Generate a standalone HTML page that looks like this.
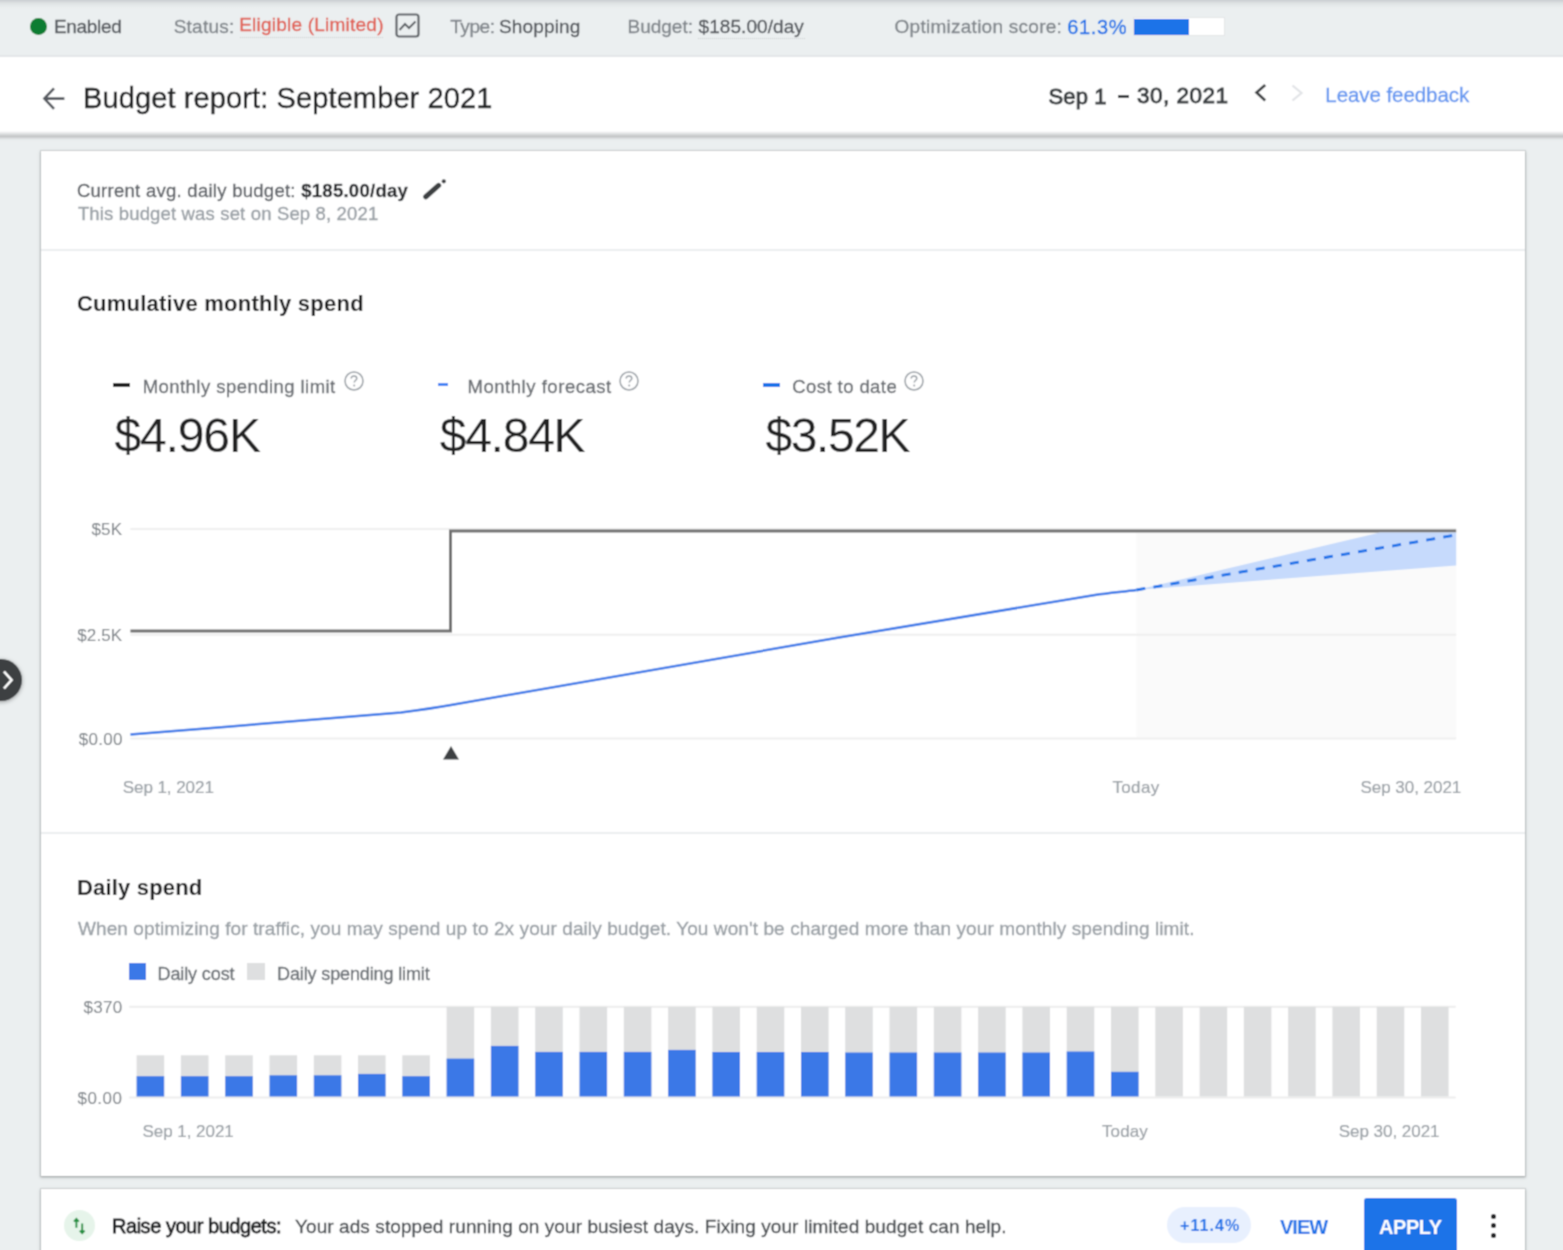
<!DOCTYPE html>
<html><head><meta charset="utf-8"><style>
html,body{margin:0;padding:0;width:1563px;height:1250px;overflow:hidden;background:#ebeff0;font-family:"Liberation Sans", sans-serif;}
.t{position:absolute;white-space:nowrap;}
.r{position:absolute;}
</style></head><body><svg width="0" height="0" style="position:absolute"><filter id="bl" x="0" y="0" width="100%" height="100%"><feConvolveMatrix order="3" kernelMatrix="0.0484 0.1232 0.0484 0.1232 0.3136 0.1232 0.0484 0.1232 0.0484" edgeMode="duplicate"/></filter></svg><div id="w" style="position:absolute;left:0;top:0;width:1563px;height:1250px;overflow:hidden;background:#ebeff0;filter:url(#bl)">
<div class="r" style="left:0.0px;top:0.0px;width:1563.0px;height:56.0px;background:#ebeff0;"></div>
<div class="r" style="left:0.0px;top:0.0px;width:1563.0px;height:8.0px;background:linear-gradient(#c9cdd0,#dfe3e4 40%,#ebeff0);"></div>
<div class="r" style="left:0.0px;top:55.0px;width:1563.0px;height:2.0px;background:#e3e6e8;"></div>
<div class="r" style="left:30px;top:18px;width:17px;height:17px;border-radius:50%;background:#0d7d30"></div>
<div class="t" style="left:53.90px;top:17.05px;font-size:19px;line-height:19px;color:#55595e;font-weight:400;letter-spacing:-0.304px;-webkit-text-stroke:0.35px #55595e;">Enabled</div>
<div class="t" style="left:173.70px;top:17.05px;font-size:19px;line-height:19px;color:#80868b;font-weight:400;letter-spacing:0.231px;-webkit-text-stroke:0.35px #80868b;">Status:</div>
<div class="t" style="left:239.20px;top:15.45px;font-size:19px;line-height:19px;color:#e06055;font-weight:400;letter-spacing:0.225px;-webkit-text-stroke:0.35px #e06055;">Eligible (Limited)</div>
<div class="r" style="left:240px;top:36.8px;width:143px;height:0;border-top:1.5px dotted #c8cbce"></div>
<svg class="r" style="left:395px;top:13px" width="25" height="25" viewBox="0 0 25 25"><rect x="1.5" y="1.5" width="22" height="22" rx="2.5" fill="none" stroke="#5f6368" stroke-width="2.2"/><path d="M4.5 17 L10 11 L14 15 L20.5 8.5" fill="none" stroke="#5f6368" stroke-width="2"/></svg>
<div class="t" style="left:450.20px;top:17.05px;font-size:19px;line-height:19px;color:#80868b;font-weight:400;letter-spacing:-0.425px;-webkit-text-stroke:0.35px #80868b;">Type:</div>
<div class="t" style="left:498.90px;top:17.05px;font-size:19px;line-height:19px;color:#55595e;font-weight:400;letter-spacing:0.159px;-webkit-text-stroke:0.35px #55595e;">Shopping</div>
<div class="t" style="left:627.50px;top:17.05px;font-size:19px;line-height:19px;color:#80868b;font-weight:400;letter-spacing:0.000px;-webkit-text-stroke:0.35px #80868b;">Budget:</div>
<div class="t" style="left:698.50px;top:17.05px;font-size:19px;line-height:19px;color:#55595e;font-weight:400;letter-spacing:0.070px;-webkit-text-stroke:0.35px #55595e;">$185.00/day</div>
<div class="r" style="left:698px;top:37.6px;width:107px;height:0;border-top:1.5px dotted #c8cbce"></div>
<div class="t" style="left:894.50px;top:17.05px;font-size:19px;line-height:19px;color:#80868b;font-weight:400;letter-spacing:0.266px;-webkit-text-stroke:0.35px #80868b;">Optimization score:</div>
<div class="t" style="left:1067.20px;top:17.00px;font-size:20px;line-height:20px;color:#1a73e8;font-weight:400;letter-spacing:0.675px;-webkit-text-stroke:0.35px #1a73e8;">61.3%</div>
<div class="r" style="left:1133.0px;top:17.0px;width:91.5px;height:19.0px;background:#ffffff;border:1px solid #e3e5e7;box-sizing:border-box"></div>
<div class="r" style="left:1134.0px;top:18.5px;width:54.6px;height:16.0px;background:#1a73e8;"></div>
<div class="r" style="left:0.0px;top:57.0px;width:1563.0px;height:74.0px;background:#ffffff;"></div>
<div class="r" style="left:0.0px;top:131.0px;width:1563.0px;height:10.0px;background:linear-gradient(#ffffff 0px,#dcdedf 3px,#c3c4c6 5.5px,#e3e6e8 8px,#ebeff0 10px);"></div>
<svg class="r" style="left:40px;top:86px" width="26" height="26" viewBox="0 0 26 26"><path d="M24.4 12.6 H5 M14 2.3 L4.4 12.6 L14 22.9" fill="none" stroke="#55595e" stroke-width="2.6"/></svg>
<div class="t" style="left:83.00px;top:84.05px;font-size:29px;line-height:29px;color:#202124;font-weight:400;letter-spacing:0.112px;-webkit-text-stroke:0.35px #202124;">Budget report: September 2021</div>
<div class="t" style="left:1048.50px;top:85.90px;font-size:22px;line-height:22px;color:#3c4043;font-weight:400;letter-spacing:0.125px;-webkit-text-stroke:0.95px #3c4043;">Sep 1</div>
<div class="r" style="left:1117.6px;top:95.3px;width:11.8px;height:2.5px;background:#3c4043;"></div>
<div class="t" style="left:1136.90px;top:85.47px;font-size:22.5px;line-height:22.5px;color:#3c4043;font-weight:400;letter-spacing:0.515px;-webkit-text-stroke:0.95px #3c4043;">30, 2021</div>
<svg class="r" style="left:1252px;top:83px" width="18" height="20" viewBox="0 0 18 20"><path d="M13.2 2 L4.6 9.5 L13.2 17.5" fill="none" stroke="#3c4043" stroke-width="2.8"/></svg>
<svg class="r" style="left:1288px;top:83px" width="18" height="20" viewBox="0 0 18 20"><path d="M4.5 2.5 L13.5 10 L4.5 17.5" fill="none" stroke="#e1e3e6" stroke-width="2.2"/></svg>
<div class="t" style="left:1325.30px;top:85.48px;font-size:20.5px;line-height:20.5px;color:#6497f0;font-weight:400;letter-spacing:-0.064px;-webkit-text-stroke:0.35px #6497f0;">Leave feedback</div>
<div class="r" style="left:41.0px;top:151.0px;width:1484.0px;height:1025.0px;background:#ffffff;box-shadow:0 0 0 1px rgba(60,64,67,.12),0 1px 2px rgba(60,64,67,.3),0 1px 3px 1px rgba(60,64,67,.15)"></div>
<div class="t" style="left:76.90px;top:182.08px;font-size:18.5px;line-height:18.5px;color:#5f6368;font-weight:400;letter-spacing:0.271px;-webkit-text-stroke:0.35px #5f6368;">Current avg. daily budget: <b style="font-weight:700;color:#202124">$185.00/day</b></div>
<svg class="r" style="left:415px;top:170px" width="40" height="40" viewBox="0 0 40 40"><path d="M10.8 26.8 L23.6 15.4" fill="none" stroke="#3c4043" stroke-width="5.2" stroke-linecap="round"/><circle cx="28.8" cy="11.3" r="2.1" fill="#3c4043"/></svg>
<div class="t" style="left:77.90px;top:205.08px;font-size:18.5px;line-height:18.5px;color:#9aa0a6;font-weight:400;letter-spacing:0.157px;-webkit-text-stroke:0.35px #9aa0a6;">This budget was set on Sep 8, 2021</div>
<div class="r" style="left:41.0px;top:248.5px;width:1484.0px;height:2.0px;background:#eceef0;"></div>
<div class="t" style="left:76.90px;top:293.30px;font-size:22px;line-height:22px;color:#202124;font-weight:700;letter-spacing:0.241px;">Cumulative monthly spend</div>
<div class="r" style="left:112.5px;top:382.5px;width:17.8px;height:4.0px;background:#202124;"></div>
<div class="t" style="left:142.70px;top:377.88px;font-size:18.5px;line-height:18.5px;color:#6a6e73;font-weight:400;letter-spacing:0.452px;-webkit-text-stroke:0.35px #6a6e73;">Monthly spending limit</div>
<div class="r" style="left:437.7px;top:383.0px;width:10.7px;height:2.8px;background:#4285f4;"></div>
<div class="t" style="left:467.50px;top:377.88px;font-size:18.5px;line-height:18.5px;color:#6a6e73;font-weight:400;letter-spacing:0.534px;-webkit-text-stroke:0.35px #6a6e73;">Monthly forecast</div>
<div class="r" style="left:763.0px;top:382.5px;width:17.3px;height:4.0px;background:#1a73e8;"></div>
<div class="t" style="left:792.30px;top:377.88px;font-size:18.5px;line-height:18.5px;color:#6a6e73;font-weight:400;letter-spacing:0.421px;-webkit-text-stroke:0.35px #6a6e73;">Cost to date</div>
<svg class="r" style="left:342.7px;top:369.6px" width="22" height="22" viewBox="0 0 22 22"><circle cx="11" cy="11" r="9" fill="none" stroke="#9aa0a6" stroke-width="1.5"/><path d="M8.2 8.6 C8.2 6.9 9.5 6 11 6 C12.6 6 13.8 7 13.8 8.4 C13.8 10.2 11.2 10.4 11.2 12.6" fill="none" stroke="#9aa0a6" stroke-width="1.5"/><circle cx="11.2" cy="15.4" r="1" fill="#9aa0a6"/></svg>
<svg class="r" style="left:618.2px;top:369.6px" width="22" height="22" viewBox="0 0 22 22"><circle cx="11" cy="11" r="9" fill="none" stroke="#9aa0a6" stroke-width="1.5"/><path d="M8.2 8.6 C8.2 6.9 9.5 6 11 6 C12.6 6 13.8 7 13.8 8.4 C13.8 10.2 11.2 10.4 11.2 12.6" fill="none" stroke="#9aa0a6" stroke-width="1.5"/><circle cx="11.2" cy="15.4" r="1" fill="#9aa0a6"/></svg>
<svg class="r" style="left:902.7px;top:369.6px" width="22" height="22" viewBox="0 0 22 22"><circle cx="11" cy="11" r="9" fill="none" stroke="#9aa0a6" stroke-width="1.5"/><path d="M8.2 8.6 C8.2 6.9 9.5 6 11 6 C12.6 6 13.8 7 13.8 8.4 C13.8 10.2 11.2 10.4 11.2 12.6" fill="none" stroke="#9aa0a6" stroke-width="1.5"/><circle cx="11.2" cy="15.4" r="1" fill="#9aa0a6"/></svg>
<div class="t" style="left:114.50px;top:411.70px;font-size:48px;line-height:48px;color:#202124;font-weight:400;letter-spacing:-1.140px;">$4.96K</div>
<div class="t" style="left:439.70px;top:411.70px;font-size:48px;line-height:48px;color:#202124;font-weight:400;letter-spacing:-1.240px;">$4.84K</div>
<div class="t" style="left:765.50px;top:411.70px;font-size:48px;line-height:48px;color:#202124;font-weight:400;letter-spacing:-1.420px;">$3.52K</div>
<svg class="r" style="left:0;top:0" width="1563" height="1250"><rect x="1136.4" y="529" width="319.8" height="209.6" fill="#fafafa"/><line x1="130.4" x2="1456.2" y1="529" y2="529" stroke="#efefef" stroke-width="2"/><line x1="130.4" x2="1456.2" y1="634.8" y2="634.8" stroke="#efefef" stroke-width="2"/><line x1="130.4" x2="1456.2" y1="738.6" y2="738.6" stroke="#efefef" stroke-width="2"/><path d="M130.4 631 H450.5 V531 H1456.2" fill="none" stroke="#707070" stroke-width="3"/><path d="M1136.4 590 L1380 532.5 L1456.2 532.5 L1456.2 565.5 Z" fill="#c6dafc"/><path d="M130.4 734.6 C220 727 330 719 401 712.4 C420 710 440 707 451 705 L837.5 637.8 L1095 595 C1110 593 1125 591.5 1136.4 590" fill="none" stroke="#3a7ae8" stroke-width="2.5"/><path d="M1136.4 590 L1456.2 535" fill="none" stroke="#1a73e8" stroke-width="2.8" stroke-dasharray="9 8.3"/><path d="M443 759.4 L451 746 L459 759.4 Z" fill="#3c4043"/></svg>
<div class="t" style="left:91.40px;top:521.05px;font-size:17px;line-height:17px;color:#80868b;font-weight:400;letter-spacing:0.200px;-webkit-text-stroke:0.1px #80868b;">$5K</div>
<div class="t" style="left:77.20px;top:626.55px;font-size:17px;line-height:17px;color:#80868b;font-weight:400;letter-spacing:0.150px;-webkit-text-stroke:0.1px #80868b;">$2.5K</div>
<div class="t" style="left:78.80px;top:730.55px;font-size:17px;line-height:17px;color:#80868b;font-weight:400;letter-spacing:0.250px;-webkit-text-stroke:0.1px #80868b;">$0.00</div>
<div class="t" style="left:122.70px;top:779.05px;font-size:17px;line-height:17px;color:#9aa0a6;font-weight:400;letter-spacing:-0.050px;-webkit-text-stroke:0.2px #9aa0a6;">Sep 1, 2021</div>
<div class="t" style="left:1112.50px;top:779.05px;font-size:17px;line-height:17px;color:#9aa0a6;font-weight:400;letter-spacing:0.325px;-webkit-text-stroke:0.2px #9aa0a6;">Today</div>
<div class="t" style="left:1360.50px;top:779.05px;font-size:17px;line-height:17px;color:#9aa0a6;font-weight:400;letter-spacing:-0.033px;-webkit-text-stroke:0.2px #9aa0a6;">Sep 30, 2021</div>
<div class="r" style="left:41.0px;top:832.0px;width:1484.0px;height:2.0px;background:#eceef0;"></div>
<div class="t" style="left:77.00px;top:876.70px;font-size:22px;line-height:22px;color:#202124;font-weight:700;letter-spacing:0.180px;">Daily spend</div>
<div class="t" style="left:78.00px;top:918.85px;font-size:19px;line-height:19px;color:#9aa0a6;font-weight:400;letter-spacing:0.090px;-webkit-text-stroke:0.35px #9aa0a6;">When optimizing for traffic, you may spend up to 2x your daily budget. You won&#39;t be charged more than your monthly spending limit.</div>
<div class="r" style="left:128.5px;top:962.5px;width:17.2px;height:17.3px;background:#3b78e7;"></div>
<div class="t" style="left:157.50px;top:964.70px;font-size:18px;line-height:18px;color:#6b7075;font-weight:400;letter-spacing:-0.111px;-webkit-text-stroke:0.35px #6b7075;">Daily cost</div>
<div class="r" style="left:247.4px;top:962.5px;width:18.1px;height:17.3px;background:#dedfe0;"></div>
<div class="t" style="left:277.10px;top:964.70px;font-size:18px;line-height:18px;color:#6b7075;font-weight:400;letter-spacing:-0.132px;-webkit-text-stroke:0.35px #6b7075;">Daily spending limit</div>
<svg class="r" style="left:0;top:0" width="1563" height="1250"><line x1="129.2" x2="1455.7" y1="1006.8" y2="1006.8" stroke="#ededed" stroke-width="2"/><line x1="129.2" x2="1455.7" y1="1097.4" y2="1097.4" stroke="#ededed" stroke-width="2"/><rect x="136.6" y="1055.3" width="27.6" height="41.2" fill="#dedfe0"/><rect x="136.6" y="1076.2" width="27.6" height="20.3" fill="#3b78e7"/><rect x="180.9" y="1055.3" width="27.6" height="41.2" fill="#dedfe0"/><rect x="180.9" y="1076.2" width="27.6" height="20.3" fill="#3b78e7"/><rect x="225.2" y="1055.3" width="27.6" height="41.2" fill="#dedfe0"/><rect x="225.2" y="1076.2" width="27.6" height="20.3" fill="#3b78e7"/><rect x="269.5" y="1055.3" width="27.6" height="41.2" fill="#dedfe0"/><rect x="269.5" y="1075.3" width="27.6" height="21.2" fill="#3b78e7"/><rect x="313.8" y="1055.3" width="27.6" height="41.2" fill="#dedfe0"/><rect x="313.8" y="1075.3" width="27.6" height="21.2" fill="#3b78e7"/><rect x="358.0" y="1055.3" width="27.6" height="41.2" fill="#dedfe0"/><rect x="358.0" y="1073.9" width="27.6" height="22.6" fill="#3b78e7"/><rect x="402.3" y="1055.3" width="27.6" height="41.2" fill="#dedfe0"/><rect x="402.3" y="1076.2" width="27.6" height="20.3" fill="#3b78e7"/><rect x="446.6" y="1006.8" width="27.6" height="89.7" fill="#dedfe0"/><rect x="446.6" y="1058.6" width="27.6" height="37.9" fill="#3b78e7"/><rect x="490.9" y="1006.8" width="27.6" height="89.7" fill="#dedfe0"/><rect x="490.9" y="1045.9" width="27.6" height="50.6" fill="#3b78e7"/><rect x="535.2" y="1006.8" width="27.6" height="89.7" fill="#dedfe0"/><rect x="535.2" y="1051.9" width="27.6" height="44.6" fill="#3b78e7"/><rect x="579.5" y="1006.8" width="27.6" height="89.7" fill="#dedfe0"/><rect x="579.5" y="1051.9" width="27.6" height="44.6" fill="#3b78e7"/><rect x="623.8" y="1006.8" width="27.6" height="89.7" fill="#dedfe0"/><rect x="623.8" y="1051.9" width="27.6" height="44.6" fill="#3b78e7"/><rect x="668.1" y="1006.8" width="27.6" height="89.7" fill="#dedfe0"/><rect x="668.1" y="1049.9" width="27.6" height="46.6" fill="#3b78e7"/><rect x="712.4" y="1006.8" width="27.6" height="89.7" fill="#dedfe0"/><rect x="712.4" y="1052" width="27.6" height="44.5" fill="#3b78e7"/><rect x="756.7" y="1006.8" width="27.6" height="89.7" fill="#dedfe0"/><rect x="756.7" y="1052" width="27.6" height="44.5" fill="#3b78e7"/><rect x="801.0" y="1006.8" width="27.6" height="89.7" fill="#dedfe0"/><rect x="801.0" y="1052" width="27.6" height="44.5" fill="#3b78e7"/><rect x="845.2" y="1006.8" width="27.6" height="89.7" fill="#dedfe0"/><rect x="845.2" y="1052.5" width="27.6" height="44.0" fill="#3b78e7"/><rect x="889.5" y="1006.8" width="27.6" height="89.7" fill="#dedfe0"/><rect x="889.5" y="1052.5" width="27.6" height="44.0" fill="#3b78e7"/><rect x="933.8" y="1006.8" width="27.6" height="89.7" fill="#dedfe0"/><rect x="933.8" y="1052.5" width="27.6" height="44.0" fill="#3b78e7"/><rect x="978.1" y="1006.8" width="27.6" height="89.7" fill="#dedfe0"/><rect x="978.1" y="1052.5" width="27.6" height="44.0" fill="#3b78e7"/><rect x="1022.4" y="1006.8" width="27.6" height="89.7" fill="#dedfe0"/><rect x="1022.4" y="1052.5" width="27.6" height="44.0" fill="#3b78e7"/><rect x="1066.7" y="1006.8" width="27.6" height="89.7" fill="#dedfe0"/><rect x="1066.7" y="1051.5" width="27.6" height="45.0" fill="#3b78e7"/><rect x="1111.0" y="1006.8" width="27.6" height="89.7" fill="#dedfe0"/><rect x="1111.0" y="1071.8" width="27.6" height="24.7" fill="#3b78e7"/><rect x="1155.3" y="1006.8" width="27.6" height="89.7" fill="#dedfe0"/><rect x="1199.6" y="1006.8" width="27.6" height="89.7" fill="#dedfe0"/><rect x="1243.8" y="1006.8" width="27.6" height="89.7" fill="#dedfe0"/><rect x="1288.1" y="1006.8" width="27.6" height="89.7" fill="#dedfe0"/><rect x="1332.4" y="1006.8" width="27.6" height="89.7" fill="#dedfe0"/><rect x="1376.7" y="1006.8" width="27.6" height="89.7" fill="#dedfe0"/><rect x="1421.0" y="1006.8" width="27.6" height="89.7" fill="#dedfe0"/></svg>
<div class="t" style="left:83.50px;top:998.55px;font-size:17px;line-height:17px;color:#80868b;font-weight:400;letter-spacing:0.263px;-webkit-text-stroke:0.1px #80868b;">$370</div>
<div class="t" style="left:77.50px;top:1089.55px;font-size:17px;line-height:17px;color:#80868b;font-weight:400;letter-spacing:0.450px;-webkit-text-stroke:0.1px #80868b;">$0.00</div>
<div class="t" style="left:142.50px;top:1122.55px;font-size:17px;line-height:17px;color:#9aa0a6;font-weight:400;letter-spacing:-0.040px;-webkit-text-stroke:0.2px #9aa0a6;">Sep 1, 2021</div>
<div class="t" style="left:1101.90px;top:1122.55px;font-size:17px;line-height:17px;color:#9aa0a6;font-weight:400;letter-spacing:0.150px;-webkit-text-stroke:0.2px #9aa0a6;">Today</div>
<div class="t" style="left:1338.70px;top:1122.55px;font-size:17px;line-height:17px;color:#9aa0a6;font-weight:400;letter-spacing:-0.025px;-webkit-text-stroke:0.2px #9aa0a6;">Sep 30, 2021</div>
<div class="r" style="left:41.0px;top:1189.0px;width:1484.0px;height:71.0px;background:#ffffff;box-shadow:0 0 0 1px rgba(60,64,67,.12),0 1px 2px rgba(60,64,67,.3),0 1px 3px 1px rgba(60,64,67,.15)"></div>
<svg class="r" style="left:64.2px;top:1210.3px" width="31" height="31" viewBox="0 0 31 31"><circle cx="15.5" cy="15.5" r="15.5" fill="#e6f4ea"/><path d="M12.4 17.8 V9.5 M10 11.6 L12.4 9 L14.8 11.6" fill="none" stroke="#1e8e3e" stroke-width="1.9"/><path d="M18.2 13.6 V22.8 M15.8 20.6 L18.2 23.2 L20.6 20.6" fill="none" stroke="#1e8e3e" stroke-width="1.9"/></svg>
<div class="t" style="left:112.00px;top:1216.00px;font-size:20px;line-height:20px;color:#202124;font-weight:400;letter-spacing:-0.467px;-webkit-text-stroke:0.8px #202124;">Raise your budgets:</div>
<div class="t" style="left:295.00px;top:1216.85px;font-size:19px;line-height:19px;color:#4a4e52;font-weight:400;letter-spacing:0.080px;-webkit-text-stroke:0.35px #4a4e52;">Your ads stopped running on your busiest days. Fixing your limited budget can help.</div>
<div class="r" style="left:1167.0px;top:1206.5px;width:84.0px;height:36.5px;background:#e8f0fe;border-radius:18px"></div>
<div class="t" style="left:1180.10px;top:1217.60px;font-size:16px;line-height:16px;color:#1a73e8;font-weight:700;letter-spacing:1.040px;">+11.4%</div>
<div class="t" style="left:1279.90px;top:1216.60px;font-size:20px;line-height:20px;color:#1a73e8;font-weight:700;letter-spacing:-0.931px;">VIEW</div>
<div class="r" style="left:1364.0px;top:1197.6px;width:93.2px;height:62.4px;background:#1a73e8;border-radius:3px"></div>
<div class="t" style="left:1379.00px;top:1216.60px;font-size:20px;line-height:20px;color:#ffffff;font-weight:700;letter-spacing:-0.425px;">APPLY</div>
<div class="r" style="left:1490.7px;top:1213.5px;width:5px;height:5px;border-radius:50%;background:#202124"></div>
<div class="r" style="left:1490.7px;top:1223.0px;width:5px;height:5px;border-radius:50%;background:#202124"></div>
<div class="r" style="left:1490.7px;top:1232.5px;width:5px;height:5px;border-radius:50%;background:#202124"></div>
<div class="r" style="left:-20px;top:659px;width:42px;height:42px;border-radius:50%;background:#3c4043;box-shadow:0 1px 4px rgba(0,0,0,.35)"></div>
<svg class="r" style="left:0;top:668px" width="16" height="24" viewBox="0 0 16 24"><path d="M4 3.5 L11.5 12 L4 20.5" fill="none" stroke="#ffffff" stroke-width="2.6"/></svg>
</div></body></html>
